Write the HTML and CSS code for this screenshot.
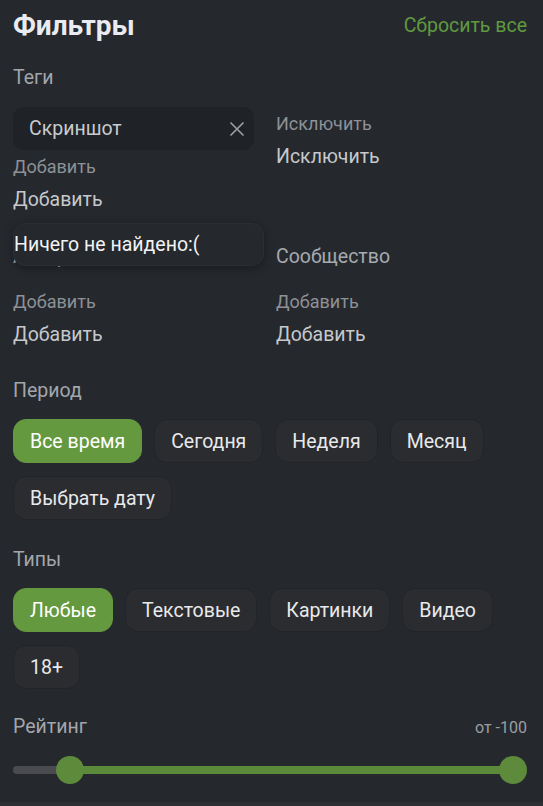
FILE: index.html
```html
<!DOCTYPE html>
<html lang="ru">
<head>
    <meta charset="UTF-8">
    <title>Фильтры</title>
    <link rel="stylesheet" href="styles.css">
</head>
<body>
    <section class="filters">
        <div class="filters-head">
            <h1 class="filters-title">Фильтры</h1>
            <span class="reset">Сбросить все</span>
        </div>

        <div class="section-label">Теги</div>
        <div class="field-grid">
            <div class="field-col">
                <div class="tag-box">
                    <span>Скриншот</span>
                    <svg class="tag-close" width="16" height="16" viewBox="0 0 16 16">
                        <path d="M1.5 1.5 L14.5 14.5 M14.5 1.5 L1.5 14.5" stroke="#9c9fa4" stroke-width="1.6" fill="none"/>
                    </svg>
                </div>
                <div class="field-hint">Добавить</div>
                <div class="field-value">Добавить</div>
            </div>
            <div class="field-col">
                <div class="field-hint">Исключить</div>
                <div class="field-value">Исключить</div>
            </div>

            <div class="field-col field-col-2">
                <div class="field-label">Авторы</div>
                <div class="field-hint">Добавить</div>
                <div class="field-value">Добавить</div>
                <div class="dropdown">Ничего не найдено:(</div>
            </div>
            <div class="field-col field-col-2">
                <div class="field-label">Сообщество</div>
                <div class="field-hint">Добавить</div>
                <div class="field-value">Добавить</div>
            </div>
        </div>

        <div class="section-label label-period">Период</div>
        <div class="chips">
            <button class="chip active">Все время</button>
            <button class="chip">Сегодня</button>
            <button class="chip">Неделя</button>
            <button class="chip">Месяц</button>
            <button class="chip">Выбрать дату</button>
        </div>

        <div class="section-label label-types">Типы</div>
        <div class="chips">
            <button class="chip active">Любые</button>
            <button class="chip">Текстовые</button>
            <button class="chip">Картинки</button>
            <button class="chip">Видео</button>
            <button class="chip">18+</button>
        </div>

        <div class="rating-head">
            <span class="section-label">Рейтинг</span>
            <span class="rating-value">от -100</span>
        </div>
        <div class="slider">
            <div class="slider-track"></div>
            <div class="slider-fill"></div>
            <div class="slider-thumb thumb-min"></div>
            <div class="slider-thumb thumb-max"></div>
        </div>
    </section>
</body>
</html>
```

FILE: styles.css
```css
* {
    box-sizing: border-box;
}

body {
    margin: 0;
    background-color: #2e2f32;
    font-family: Roboto, "Noto Sans", sans-serif;
}

.filters {
    height: 802px;
    padding: 0 16px 0 13px;
    background-color: #25292e;
    overflow: hidden;
}

.filters-head {
    display: flex;
    justify-content: space-between;
    align-items: center;
    height: 50px;
}

.filters-title {
    margin: 0;
    font-size: 28px;
    font-weight: 700;
    color: #e9ebf0;
}

.reset {
    font-size: 19.5px;
    color: #609a3f;
}

.section-label {
    margin-top: 16px;
    height: 24px;
    line-height: 24px;
    font-size: 19.5px;
    color: #a3a6ab;
}

.field-grid {
    display: grid;
    grid-template-columns: 251px 251px;
    column-gap: 12px;
    margin-top: 17px;
}

.field-col {
    position: relative;
}

.field-col-2 {
    margin-top: 24px;
}

.tag-box {
    display: flex;
    align-items: center;
    justify-content: space-between;
    width: 241px;
    height: 43px;
    padding: 0 9px 0 16px;
    border-radius: 11px;
    background-color: #1f2226;
    font-size: 19.5px;
    color: #c9cbcf;
}

.field-hint {
    height: 33px;
    line-height: 33px;
    font-size: 18px;
    color: #8e9196;
}

.field-value {
    height: 33px;
    line-height: 33px;
    font-size: 19.5px;
    color: #c6c8cc;
}

.field-label {
    height: 33px;
    line-height: 33px;
    margin-bottom: 12px;
    font-size: 19.5px;
    color: #a7aaaf;
}

.dropdown {
    position: absolute;
    top: -17px;
    left: 0;
    width: 251px;
    height: 43px;
    line-height: 41px;
    border: 1px solid #2b2e32;
    border-radius: 12px;
    background-color: #25282c;
    box-shadow: 0 2px 8px rgba(0, 0, 0, 0.35);
    font-size: 19.5px;
    color: #f2f3f5;
}

.label-period {
    margin-top: 28px;
}

.label-types {
    margin-top: 28px;
}

.chips {
    display: flex;
    flex-wrap: wrap;
    gap: 13px 12px;
    margin-top: 16px;
}

.chip {
    height: 44px;
    padding: 0 16px;
    border: 1px solid #232428;
    border-radius: 13px;
    background-color: #2b2c30;
    font-family: Roboto, "Noto Sans", sans-serif;
    font-size: 19.5px;
    color: #e8e9eb;
}

.chip.active {
    background-color: #65993f;
    border-color: #65993f;
    color: #ffffff;
}

.rating-head {
    display: flex;
    justify-content: space-between;
    align-items: center;
    margin-top: 26px;
}

.rating-head .section-label {
    margin-top: 0;
}

.rating-value {
    font-size: 16px;
    color: #9a9da2;
}

.slider {
    position: relative;
    height: 28px;
    margin-top: 17px;
}

.slider-track {
    position: absolute;
    top: 10px;
    left: 0;
    right: 14px;
    height: 8px;
    border-radius: 4px;
    background-color: #4a4b50;
}

.slider-fill {
    position: absolute;
    top: 10px;
    left: 57px;
    right: 14px;
    height: 8px;
    background-color: #5b8a3a;
}

.slider-thumb {
    position: absolute;
    top: 0;
    width: 28px;
    height: 28px;
    border-radius: 50%;
    background-color: #5d8a3b;
}

.thumb-min {
    left: 43px;
}

.thumb-max {
    right: 0;
}
```
